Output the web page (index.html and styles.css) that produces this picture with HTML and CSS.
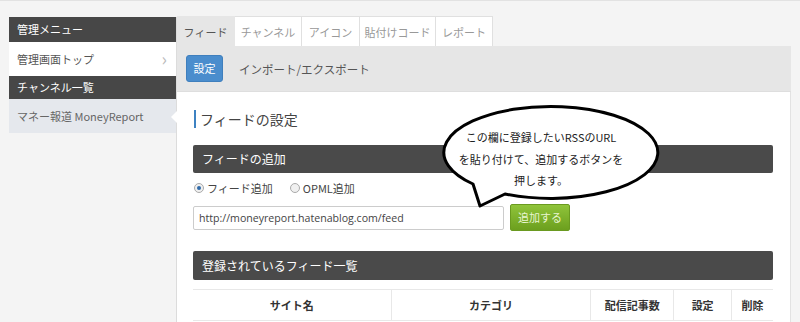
FILE: index.html
```html
<!DOCTYPE html>
<html lang="ja">
<head>
<meta charset="utf-8">
<title>フィードの設定</title>
<link rel="stylesheet" href="styles.css">
</head>
<body>
<div class="page">
  <aside class="sidebar">
    <div class="side-head">管理メニュー</div>
    <div class="side-item">管理画面トップ<span class="chev">›</span></div>
    <div class="side-head side-head2">チャンネル一覧</div>
    <div class="side-item active">マネー報道 MoneyReport</div>
  </aside>
  <main class="main">
    <nav class="tabs">
      <div class="tab current">フィード</div>
      <div class="tab">チャンネル</div>
      <div class="tab">アイコン</div>
      <div class="tab">貼付けコード</div>
      <div class="tab">レポート</div>
    </nav>
    <div class="subbar">
      <span class="btn-blue">設定</span>
      <span class="sublink">インポート/エクスポート</span>
    </div>
    <section class="panel">
      <span class="notch"></span>
      <h1 class="title">フィードの設定</h1>
      <div class="bar">フィードの追加</div>
      <div class="radios">
        <span class="radio on"></span><span class="rlabel">フィード追加</span>
        <span class="radio"></span><span class="rlabel">OPML追加</span>
      </div>
      <div class="addrow">
        <div class="input">http://moneyreport.hatenablog.com/feed</div>
        <span class="btn-green">追加する</span>
      </div>
      <div class="bar bar2">登録されているフィード一覧</div>
      <div class="table">
        <div class="th c1">サイト名</div>
        <div class="th c2">カテゴリ</div>
        <div class="th c3">配信記事数</div>
        <div class="th c4">設定</div>
        <div class="th c5">削除</div>
      </div>
    </section>
  </main>
</div>
<div class="bubble">
  <svg class="bubble-shape" width="240" height="115" viewBox="0 0 240 115">
    <path d="M80,95 L55,107 L48,85 A107,46 0 1 1 80,95 Z" fill="#fff" stroke="#000" stroke-width="3" stroke-linejoin="round"/>
  </svg>
  <div class="bubble-text">
    <p>この欄に登録したいRSSのURL</p>
    <p>を貼り付けて、追加するボタンを</p>
    <p>押します。</p>
  </div>
</div>
</body>
</html>
```
FILE: styles.css
```css
* { box-sizing: border-box; }
html, body { margin: 0; padding: 0; }
body {
  background: #f4f4f4;
  font-family: "Noto Sans CJK JP", "Noto Sans", sans-serif;
  color: #555;
  width: 800px;
  height: 322px;
  overflow: hidden;
  position: relative;
  border-top: 1px solid #e2e2e2;
}
.page {
  display: flex;
  padding-top: 15px;
  padding-left: 9px;
  height: 321px;
}
.sidebar {
  width: 168px;
  border-right: 1px solid #dcdcdc;
  margin-top: 1px;
  flex: none;
}
.side-head {
  height: 25px;
  background: #474747;
  color: #fff;
  font-size: 11px;
  line-height: 25px;
  padding-left: 8px;
}
.side-head2 { height: 23px; line-height: 23px; }
.side-item {
  height: 34px;
  background: #fff;
  font-size: 11px;
  line-height: 34px;
  padding-left: 8px;
  color: #555;
  position: relative;
}
.side-item.active { background: #e5e8ed; color: #666; }
.chev {
  position: absolute;
  right: 9px;
  top: 0;
  color: #bbb;
  font-size: 18px;
  line-height: 32px;
}
.main {
  width: 614px;
  display: flex;
  flex-direction: column;
  flex: none;
}
.tabs { display: flex; height: 30px; }
.tab {
  background: #fff;
  border: 1px solid #e0e0e0;
  border-bottom: none;
  border-left: none;
  font-size: 11px;
  color: #999;
  text-align: center;
  line-height: 30px;
}
.tab.current { background: #e6e6e6; color: #555; border-color: #e6e6e6; }
.tab:nth-child(1) { width: 58px; }
.tab:nth-child(2) { width: 67px; }
.tab:nth-child(3) { width: 58px; }
.tab:nth-child(4) { width: 76px; }
.tab:nth-child(5) { width: 57px; }
.subbar {
  height: 46px;
  background: #e6e6e6;
  display: flex;
  align-items: center;
  padding-left: 9px;
  border-bottom: 1px solid #dedede;
}
.btn-blue {
  width: 37px;
  height: 27px;
  background: #4a8dcd;
  border: 1px solid #3f7fbd;
  border-radius: 3px;
  color: #fff;
  font-size: 11px;
  line-height: 25px;
  text-align: center;
}
.sublink { margin-left: 16px; font-size: 11.5px; color: #555; }
.panel {
  flex: 1;
  background: #fff;
  border-right: 1px solid #e2e2e2;
  padding: 18px 17px 0 16px;
  position: relative;
}
.notch {
  position: absolute;
  left: -6px;
  top: 19px;
  width: 0;
  height: 0;
  border-top: 6px solid transparent;
  border-bottom: 6px solid transparent;
  border-right: 6px solid #fff;
}
.title {
  margin: 0 0 0 1px;
  font-size: 14px;
  font-weight: normal;
  color: #444;
  line-height: 18px;
  border-left: 2px solid #3e82c2;
  padding-left: 4px;
}
.bar {
  margin-top: 17px;
  height: 28px;
  background: #4a4a4a;
  border-radius: 2px;
  color: #fff;
  font-size: 12px;
  line-height: 28px;
  padding-left: 9px;
}
.bar2 { margin-top: 20px; height: 29px; line-height: 29px; }
.radios {
  display: flex;
  align-items: center;
  height: 30px;
  padding-left: 1px;
  font-size: 11px;
  color: #444;
}
.radio {
  width: 10px;
  height: 10px;
  border-radius: 50%;
  border: 1px solid #aaa;
  background: #f0f0f0;
  margin-right: 3px;
  position: relative;
}
.radio.on::after {
  content: "";
  position: absolute;
  left: 2px;
  top: 2px;
  width: 4px;
  height: 4px;
  border-radius: 50%;
  background: #2f6aa8;
}
.rlabel { margin-right: 17px; }
.addrow { display: flex; align-items: center; margin-top: 1px; }
.input {
  width: 311px;
  height: 24px;
  border: 1px solid #ccc;
  border-radius: 2px;
  font-family: "Open Sans", "Noto Sans", sans-serif;
  font-size: 10.6px;
  color: #444;
  line-height: 22px;
  padding-left: 5px;
}
.btn-green {
  margin-left: 6px;
  width: 60px;
  height: 27px;
  background: linear-gradient(#8fc43a, #6c9f1e);
  border: 1px solid #6a9a20;
  border-radius: 2px;
  color: #e8f5d0;
  font-size: 11px;
  text-align: center;
  line-height: 25px;
}
.table {
  margin-top: 9px;
  display: flex;
  border-top: 1px solid #e8e8e8;
  border-bottom: 1px solid #e8e8e8;
}
.th {
  height: 30px;
  line-height: 30px;
  text-align: center;
  font-size: 11px;
  font-weight: bold;
  color: #333;
  border-right: 1px solid #e8e8e8;
}
.th.c5 { border-right: none; }
.c1 { width: 199px; }
.c2 { width: 200px; }
.c3 { width: 83px; }
.c4 { width: 58px; }
.c5 { width: 41px; }
.bubble {
  position: absolute;
  left: 425px;
  top: 98px;
  width: 240px;
  height: 115px;
}
.bubble-shape { display: block; }
.bubble-text {
  position: absolute;
  left: 10px;
  width: 212px;
  top: 28px;
  text-align: center;
  font-size: 11px;
  color: #222;
  line-height: 21.5px;
}
.bubble-text p { margin: 0; }
```
